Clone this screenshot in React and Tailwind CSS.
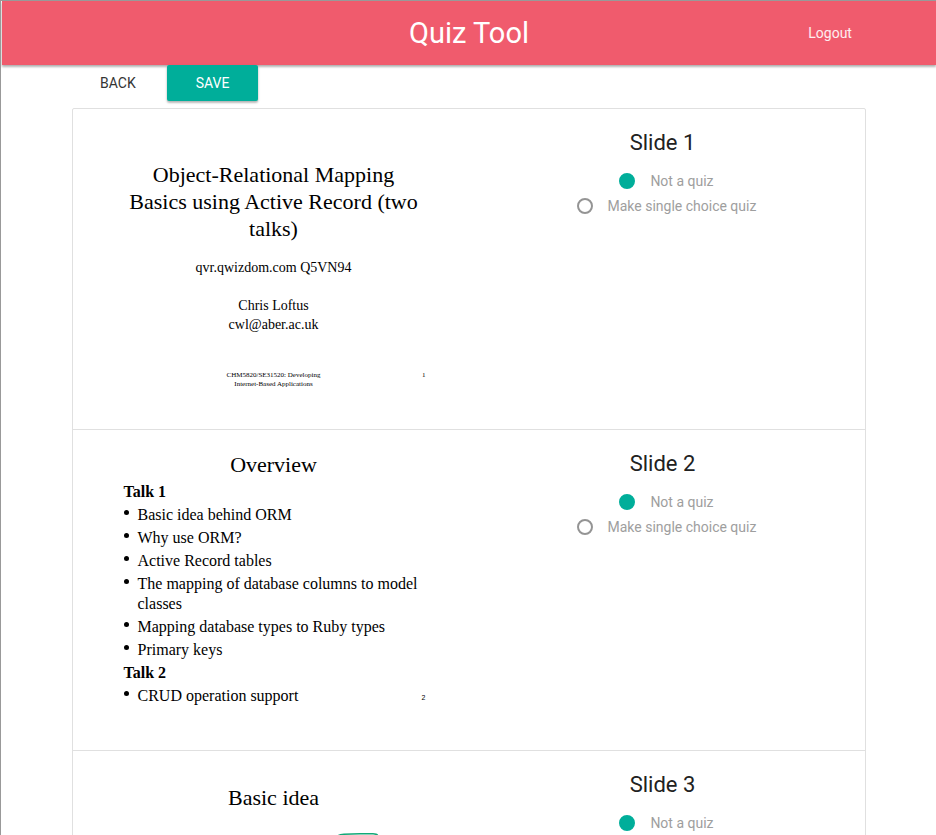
import React from "react";

function Header() {
  return (
    <header className="relative flex h-16 shrink-0 items-center justify-center bg-[#f05b6d] text-white shadow-[0_2px_2px_0_rgba(0,0,0,0.2),0_1px_3px_0_rgba(0,0,0,0.2)]">
      <h1 className="text-[29px] leading-8">Quiz Tool</h1>
      <a href="#logout" className="absolute right-[9%] text-sm text-white/90">
        Logout
      </a>
    </header>
  );
}

function Toolbar() {
  return (
    <div className="relative flex h-9 text-sm">
      <button type="button" className="px-7 text-[#343434] uppercase">
        Back
      </button>
      <button
        type="button"
        className="ml-[3px] rounded-[2px] bg-[#00ae9a] px-[29px] text-white uppercase shadow-[0_2px_2px_0_rgba(0,0,0,0.2),0_1px_3px_0_rgba(0,0,0,0.15)]"
      >
        Save
      </button>
    </div>
  );
}

function Choice({ name, value, label, defaultChecked }) {
  return (
    <label className="flex h-[25px] items-center gap-[15px] text-sm text-[#9e9e9e]">
      <input
        type="radio"
        name={name}
        value={value}
        defaultChecked={defaultChecked}
        className="size-4 appearance-none rounded-full border-2 border-[#949494] checked:border-[#00ae9a] checked:bg-[#00ae9a]"
      />
      {label}
    </label>
  );
}

function QuizOptions({ number }) {
  const name = `slide-${number}`;
  return (
    <fieldset aria-labelledby={name} className="flex min-w-0 flex-col items-center pt-5">
      <h2 id={name} className="mb-3 text-[22px] leading-[27px] text-[#212121]">
        Slide {number}
      </h2>
      <div className="flex flex-col items-center pl-2">
        <Choice name={name} value="none" label="Not a quiz" defaultChecked />
        <Choice name={name} value="single" label="Make single choice quiz" />
      </div>
    </fieldset>
  );
}

function TitleSlide() {
  return (
    <div className="flex flex-col items-center pt-[52px]">
      <h3 className="mb-4 text-[22px] leading-[27px]">
        Object-Relational Mapping
        <br />
        Basics using Active Record (two
        <br />
        talks)
      </h3>
      <p className="mb-[19px] text-sm leading-[19px]">qvr.qwizdom.com Q5VN94</p>
      <p className="text-sm leading-[19px]">
        Chris Loftus
        <br />
        cwl@aber.ac.uk
      </p>
      <div className="mt-[37px] grid w-full grid-cols-[1fr_auto_1fr] text-[7px] leading-[9px]">
        <p className="col-start-2">
          CHM5820/SE31520: Developing
          <br />
          Internet-Based Applications
        </p>
        <span className="text-right">1</span>
      </div>
    </div>
  );
}

function Bullet({ children }) {
  return (
    <li className="flex gap-[9px]">
      <span className="mt-[5px] size-[5px] shrink-0 rounded-full bg-black" />
      <span>{children}</span>
    </li>
  );
}

function OverviewSlide() {
  return (
    <div className="flex flex-col pt-[21px]">
      <h3 className="mb-1 text-[22px] leading-[27px]">Overview</h3>
      <div className="flex items-end justify-between pl-0.5 text-left">
        <ul className="flex flex-col gap-[3px] text-base leading-5 whitespace-nowrap">
          <li className="font-bold">Talk 1</li>
          <Bullet>Basic idea behind ORM</Bullet>
          <Bullet>Why use ORM?</Bullet>
          <Bullet>Active Record tables</Bullet>
          <Bullet>
            The mapping of database columns to model
            <br />
            classes
          </Bullet>
          <Bullet>Mapping database types to Ruby types</Bullet>
          <Bullet>Primary keys</Bullet>
          <li className="font-bold">Talk 2</li>
          <Bullet>CRUD operation support</Bullet>
        </ul>
        <span className="pb-1 font-['Liberation_Sans',sans-serif] text-[7px] leading-[9px]">2</span>
      </div>
    </div>
  );
}

function IdeaSlide() {
  return (
    <div className="flex flex-col pt-[33px]">
      <h3 className="mb-[22px] text-[22px] leading-[27px]">Basic idea</h3>
      <svg viewBox="0 0 304 60" className="w-full" fill="none" stroke="#12a877" strokeWidth="1.5">
        <path d="M215 4 Q216 1.5 222 1.2 L238 .8 H251 Q256 .8 256 4 V36 Q256 40 251 40 H220 Q215 40 215 36Z" />
      </svg>
    </div>
  );
}

const slides = [
  { number: 1, Content: TitleSlide },
  { number: 2, Content: OverviewSlide },
  { number: 3, Content: IdeaSlide },
];

export default function App() {
  return (
    <div className="h-screen overflow-hidden border-t border-l border-[#999] bg-white pl-px font-['Roboto',sans-serif]">
      <Header />
      <main className="mx-auto w-[85%]">
        <Toolbar />
        <ul className="mt-[7px] rounded-[2px] border border-[#e0e0e0]">
          {slides.map(({ number, Content }) => (
            <li
              key={number}
              className="grid h-[321px] grid-cols-2 border-b border-[#e0e0e0] pr-2 pl-1.5 last:border-b-0"
            >
              <article className="mx-auto w-[304px] text-center font-['Liberation_Serif',serif] text-black">
                <Content />
              </article>
              <QuizOptions number={number} />
            </li>
          ))}
        </ul>
      </main>
    </div>
  );
}
